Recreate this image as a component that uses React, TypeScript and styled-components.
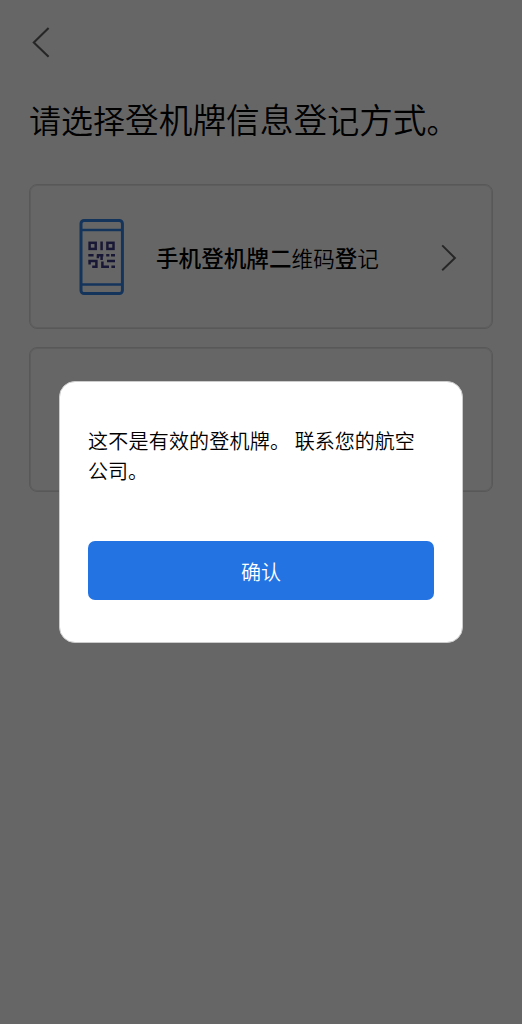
import React from 'react';
import styled, { createGlobalStyle } from 'styled-components';

type CardProps = {
    icon?: React.ReactNode;
    children?: React.ReactNode;
};

const BackIcon = () => (
    <svg width="20" height="34" viewBox="0 0 20 34" fill="none">
        <path d="M18.6 3L3.8 17.4L18.6 31.8" stroke="#606060" strokeWidth="2.1" />
    </svg>
);

const NextIcon = () => (
    <svg width="18" height="28" viewBox="0 0 18 28" fill="none">
        <path d="M1.2 2.4L13.9 15L1.2 27.2" stroke="#606060" strokeWidth="2" />
    </svg>
);

const PhoneQrIcon = () => (
    <svg width="46" height="78" viewBox="0 0 46 78" fill="none">
        <rect x="2" y="2.5" width="41.4" height="73" rx="3" stroke="#3583e4" strokeWidth="3" />
        <path d="M2 12H43M2 66.5H43" stroke="#3583e4" strokeWidth="2.6" />
        <g stroke="#3e3a84" strokeWidth="2.5">
            <rect x="10.6" y="24.8" width="6.1" height="6.1" />
            <rect x="28.4" y="24.8" width="6.1" height="6.1" />
            <path d="M22.6 23.5V32.2" />
            <path d="M9.3 37.3H14.6M17.8 37.3H24.4M22.6 37.3V42M18.9 37.3V40.2M27.2 37.3H30.4M32 37.3H36" />
            <path d="M9.3 43H17.4V50M10.6 43V46.6M13.2 48.7H17" />
            <path d="M23.4 43.5V48.7H30M28 43H36M32.4 48.7H36" />
        </g>
    </svg>
);

const Card = ({ icon, children }: CardProps) => {
    return (
        <StCard>
            <StIconWrap>{icon}</StIconWrap>
            <StCardLabel>{children}</StCardLabel>
            <NextIcon />
        </StCard>
    );
};

const App = () => {
    return (
        <>
            <GlobalStyle />
            <StPage>
                <StBackBtn type="button" aria-label="back">
                    <BackIcon />
                </StBackBtn>
                <StTitle>
                    <StSub $size={32}>请选择</StSub>登机牌信息登<StSub $size={32}>记</StSub>方式
                    <StSub $size={31}>。</StSub>
                </StTitle>
                <StCardList>
                    <Card icon={<PhoneQrIcon />}>
                        手机登机牌二<StSub $size={21.6}>维码</StSub>登<StSub $size={21.6}>记</StSub>
                    </Card>
                    <Card />
                </StCardList>
            </StPage>
            <StDim>
                <StModal role="dialog">
                    <StMessage>
                        <StFirst>这不是有效的登机牌。</StFirst> 联系您的航空
                        <br />
                        公司。
                    </StMessage>
                    <StConfirmBtn type="button">确认</StConfirmBtn>
                </StModal>
            </StDim>
        </>
    );
};

export default App;

const GlobalStyle = createGlobalStyle`
    * {
        box-sizing: border-box;
    }
    body {
        margin: 0;
        background: #fff;
        color: #000;
        font-family: 'Noto Sans CJK SC DemiLight', 'Noto Sans CJK SC', sans-serif;
    }
`;
const StPage = styled.main`
    height: 1024px;
    padding: 25px 29px 0;
    overflow: hidden;
`;
const StBackBtn = styled.button`
    display: block;
    height: 34px;
    padding: 0 1px;
    border: none;
    background: none;
`;
const StTitle = styled.h1`
    height: 50px;
    margin: 36px 0 39px;
    font-size: 33.7px;
    font-weight: 350;
    line-height: 48px;
    white-space: nowrap;
`;
const StSub = styled.span<{ $size: number }>`
    font-family: 'Noto Sans CJK SC DemiLight', 'Noto Sans CJK SC', sans-serif;
    font-size: ${({ $size }) => $size}px;
    font-weight: 350;
`;
const StCardList = styled.div`
    display: flex;
    flex-direction: column;
    gap: 18px;
`;
const StCard = styled.div`
    display: flex;
    align-items: center;
    height: 145px;
    padding: 0 33px 0 49px;
    border: 1px solid #dcdcdc;
    border-radius: 8px;
    box-shadow: inset 0 0 0 1px #e9e9e9;
`;
const StIconWrap = styled.div`
    width: 77px;
    height: 78px;
`;
const StCardLabel = styled.div`
    flex: 1;
    padding-top: 2px;
    font-family: 'Noto Sans CJK SC', sans-serif;
    font-size: 22.6px;
    font-weight: 500;
    line-height: 34px;
    white-space: nowrap;
`;
const StDim = styled.div`
    position: fixed;
    inset: 0;
    display: flex;
    align-items: center;
    justify-content: center;
    background: rgba(0, 0, 0, 0.6);
`;
const StModal = styled.div`
    width: 404px;
    height: 262px;
    padding: 44px 28px 0;
    border: 1px solid #ccc;
    border-radius: 16px;
    background: #fff;
`;
const StMessage = styled.p`
    height: 60px;
    margin: 0 0 55px;
    font-size: 20px;
    font-weight: 350;
    line-height: 30px;
    white-space: nowrap;
`;
const StFirst = styled.span`
    letter-spacing: 0.22px;
`;
const StConfirmBtn = styled.button`
    display: block;
    width: 100%;
    height: 59px;
    padding: 2px 0 0;
    border: none;
    border-radius: 7px;
    background: #2473e3;
    color: #fff;
    font-family: inherit;
    font-size: 20px;
    font-weight: 350;
`;
